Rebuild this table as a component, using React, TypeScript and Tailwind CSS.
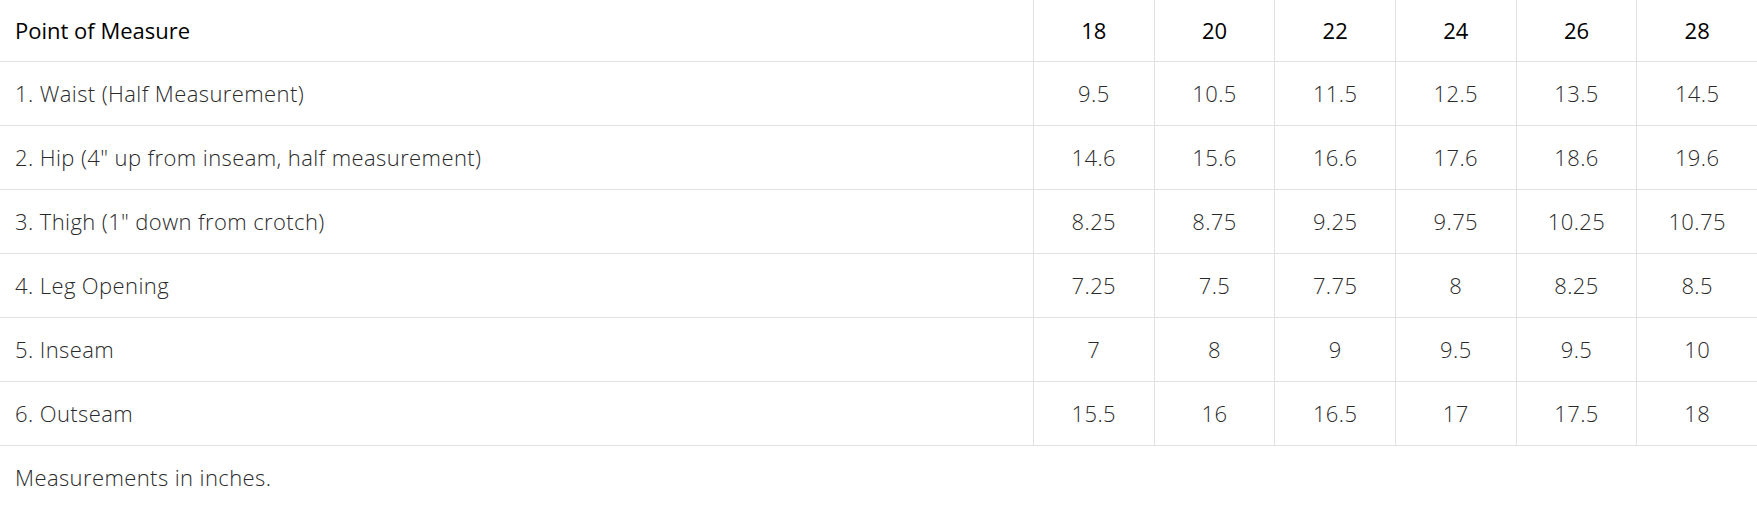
const sizes = ["18", "20", "22", "24", "26", "28"];

const rows: { label: string; values: string[] }[] = [
  { label: "1. Waist (Half Measurement)", values: ["9.5", "10.5", "11.5", "12.5", "13.5", "14.5"] },
  { label: "2. Hip (4\" up from inseam, half measurement)", values: ["14.6", "15.6", "16.6", "17.6", "18.6", "19.6"] },
  { label: "3. Thigh (1\" down from crotch)", values: ["8.25", "8.75", "9.25", "9.75", "10.25", "10.75"] },
  { label: "4. Leg Opening", values: ["7.25", "7.5", "7.75", "8", "8.25", "8.5"] },
  { label: "5. Inseam", values: ["7", "8", "9", "9.5", "9.5", "10"] },
  { label: "6. Outseam", values: ["15.5", "16", "16.5", "17", "17.5", "18"] },
];

export default function App() {
  return (
    <div className="w-[1757px] bg-white font-['Open_Sans','Liberation_Sans',sans-serif] text-[22px]">
      <div className="grid grid-cols-[1033px_repeat(6,1fr)]">
        {/* header */}
        <div className="h-[62px] border-b border-[#e1e1e1] flex items-center pl-[15px] text-black font-medium">
          Point of Measure
        </div>
        {sizes.map((s) => (
          <div
            key={s}
            className="h-[62px] border-b border-l border-[#e1e1e1] flex items-center justify-center text-black font-medium"
          >
            {s}
          </div>
        ))}

        {rows.map((row) => (
          <>
            <div
              key={row.label}
              className="h-[64px] border-b border-[#e1e1e1] flex items-center pl-[15px] text-[#2a2a2a] font-light tracking-[0.4px]"
            >
              {row.label}
            </div>
            {row.values.map((v, i) => (
              <div
                key={row.label + i}
                className="h-[64px] border-b border-l border-[#e1e1e1] flex items-center justify-center text-[#2a2a2a] font-light tracking-[0.4px]"
              >
                {v}
              </div>
            ))}
          </>
        ))}
      </div>
      <p className="h-[62px] flex items-center pl-[15px] text-[#2a2a2a] font-light tracking-[0.4px]">
        Measurements in inches.
      </p>
    </div>
  );
}
